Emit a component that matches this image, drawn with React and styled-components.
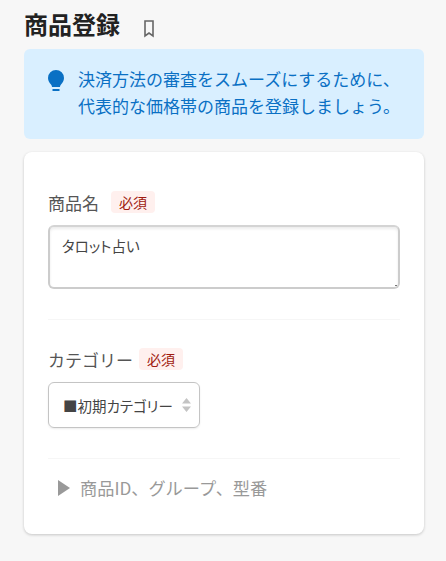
import React from "react";
import styled, { createGlobalStyle } from "styled-components";

const GlobalStyle = createGlobalStyle`
  html, body {
    margin: 0;
    background-color: #f7f7f7;
    font-family: "Noto Sans CJK JP", "Liberation Sans", sans-serif;
    color: #444;
  }
`;

const Page = styled.div`
  width: 446px;
  height: 561px;
  box-sizing: border-box;
  padding: 8px 22px 0 24px;
  overflow: hidden;
`;

const TitleRow = styled.div`
  display: flex;
  align-items: center;
  gap: 24px;
  height: 32px;
  margin-bottom: 9px;
`;

const Title = styled.h1`
  margin: 0;
  font-size: 24px;
  font-weight: 700;
  line-height: 32px;
  color: #222;
`;

const BookmarkIcon = styled.svg`
  width: 10px;
  height: 18px;
  margin-top: 9px;
  display: block;
`;

const Notice = styled.div`
  display: flex;
  height: 90px;
  box-sizing: border-box;
  padding: 16px 20px 0 22px;
  gap: 12px;
  background-color: #d9efff;
  border-radius: 6px;
  color: #0a70c4;
  font-size: 17px;
  line-height: 27px;
`;

const BulbIcon = styled.svg`
  width: 20px;
  height: 24px;
  margin-top: 4px;
  flex-shrink: 0;
`;

const NoticeText = styled.p`
  margin: 0;
  white-space: nowrap;
`;

const Card = styled.div`
  height: 382px;
  box-sizing: border-box;
  margin-top: 13px;
  padding: 35px 24px 0;
  background-color: #fff;
  border-radius: 8px;
  box-shadow: 0 1px 3px rgba(0, 0, 0, 0.2);
`;

const LabelRow = styled.div`
  display: flex;
  align-items: center;
  gap: ${(p) => p.$gap}px;
  height: 30px;
`;

const Label = styled.span`
  font-size: 17px;
  color: #555;
`;

const Required = styled.span`
  display: inline-block;
  padding: 0 8px;
  height: 22px;
  line-height: 22px;
  font-size: 14px;
  color: #a01a10;
  background-color: #fff0ee;
  border-radius: 4px;
`;

const NameInput = styled.textarea`
  display: block;
  width: 100%;
  height: 64px;
  box-sizing: border-box;
  margin-top: 8px;
  padding: 7px 12px;
  font-family: inherit;
  font-size: 14.5px;
  font-feature-settings: "palt";
  line-height: 24px;
  color: #444;
  border: 2px solid #ccc;
  border-top-color: #d4d4d4;
  border-radius: 6px;
  outline: none;
  resize: none;
  box-shadow: inset 0 2px 3px rgba(0, 0, 0, 0.08);
  background: linear-gradient(#777, #777) no-repeat right 1px bottom 1px / 2px 1px;
`;

const Divider = styled.hr`
  margin: ${(p) => p.$top}px 0 ${(p) => p.$bottom}px;
  border: 0;
  border-top: 1px solid #f6f6f6;
`;

const SelectBox = styled.div`
  display: flex;
  align-items: center;
  width: 152px;
  height: 46px;
  box-sizing: border-box;
  margin-top: 8px;
  padding: 0 8px 0 14px;
  border: 1px solid #c4c4c4;
  border-radius: 6px;
  font-size: 14.5px;
  font-feature-settings: "palt";
  color: #444;
  white-space: nowrap;
  box-shadow: 0 1px 2px rgba(0, 0, 0, 0.08);
`;

const SelectText = styled.span`
  flex: 1;
  overflow: hidden;
`;

const SortIcon = styled.svg`
  width: 9px;
  height: 16px;
  flex-shrink: 0;
`;

const Disclosure = styled.div`
  display: flex;
  align-items: center;
  gap: 10px;
  padding-left: 10px;
  font-size: 17.2px;
  color: #999;
`;

const Triangle = styled.span`
  width: 0;
  height: 0;
  border-left: 12px solid #999;
  border-top: 8px solid transparent;
  border-bottom: 8px solid transparent;
`;

export default function App() {
  return (
    <Page>
      <GlobalStyle />
      <TitleRow>
        <Title>商品登録</Title>
        <BookmarkIcon viewBox="0 0 10 18">
          <path d="M1 1h8v15l-4-3-4 3z" fill="none" stroke="#666" strokeWidth="1.6" />
        </BookmarkIcon>
      </TitleRow>
      <Notice>
        <BulbIcon viewBox="0 0 20 24">
          <path
            d="M10 1a8 8 0 0 0-8 8c0 3 1.6 4.800 3 6.500.7.800 1 1.500 1 2.500h8c0-1 .3-1.700 1-2.500 1.400-1.700 3-3.500 3-6.500a8 8 0 0 0-8-8z"
            fill="#0a70c4"
          />
          <rect x="6.500" y="20" width="7" height="2" fill="#0a70c4" />
        </BulbIcon>
        <NoticeText>
          決済方法の審査をスムーズにするために、
          <br />
          代表的な価格帯の商品を登録しましょう。
        </NoticeText>
      </Notice>
      <Card>
        <LabelRow $gap={12}>
          <Label>商品名</Label>
          <Required>必須</Required>
        </LabelRow>
        <NameInput defaultValue="タロット占い" />
        <Divider $top={30} $bottom={24} />
        <LabelRow $gap={6}>
          <Label>カテゴリー</Label>
          <Required>必須</Required>
        </LabelRow>
        <SelectBox>
          <SelectText>■初期カテゴリー</SelectText>
          <SortIcon viewBox="0 0 9 16">
            <path d="M4.500 1 9 6.500H0zM4.500 15 0 9.500h9z" fill="#c4c4c4" />
          </SortIcon>
        </SelectBox>
        <Divider $top={30} $bottom={16} />
        <Disclosure>
          <Triangle />
          商品ID、グループ、型番
        </Disclosure>
      </Card>
    </Page>
  );
}
